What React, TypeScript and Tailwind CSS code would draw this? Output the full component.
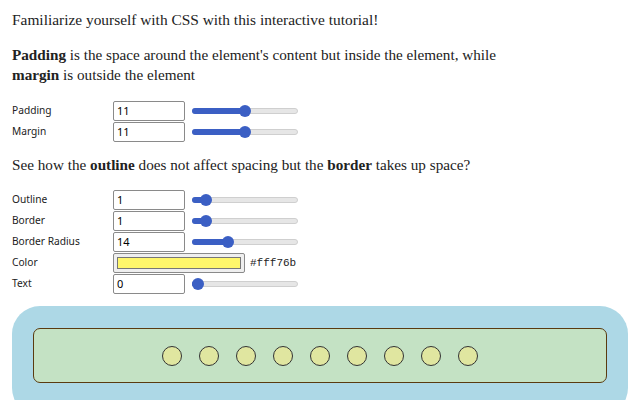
import React from "react";

const serif = { fontFamily: '"Liberation Serif", serif' };

function Slider({ pct }: { pct: number }) {
  const left = (pct * 94) / 100;
  return (
    <div className="relative w-[106px] h-[12px] flex items-center">
      <div className="w-full h-[6px] rounded-full bg-[#e6e6e6] border border-[#cfcfcf]" />
      <div className="absolute left-0 h-[6px] rounded-full bg-[#3b5fc4]" style={{ width: `${left + 6}px` }} />
      <div className="absolute w-[12px] h-[12px] rounded-full bg-[#3b5fc4]" style={{ left: `${left}px` }} />
    </div>
  );
}

function Row({ label, value, pct }: { label: string; value: string; pct: number }) {
  return (
    <div className="flex items-center h-[20px] mb-[1px]">
      <div className="w-[101px] text-[10.2px] text-[#222]">{label}</div>
      <div className="w-[72px] h-[20px] border border-[#8a8a8a] rounded-[2px] bg-white text-[11px] flex items-center pl-[3px] text-black">
        {value}
      </div>
      <div className="ml-[7px]">
        <Slider pct={pct} />
      </div>
    </div>
  );
}

export default function App() {
  return (
    <div className="w-[640px] h-[400px] overflow-hidden bg-white px-[12px] pt-[9px] text-[#222]" style={{ fontFamily: '"Noto Sans", sans-serif' }}>
      <p className="text-[15.4px] leading-[22px]" style={serif}>
        Familiarize yourself with CSS with this interactive tutorial!
      </p>
      <p className="text-[15.2px] leading-[20px] mt-[14px]" style={serif}>
        <b>Padding</b> is the space around the element's content but inside the element, while
        <br />
        <b>margin</b> is outside the element
      </p>
      <div className="mt-[16px]">
        <Row label="Padding" value="11" pct={50} />
        <Row label="Margin" value="11" pct={50} />
      </div>
      <p className="text-[15.2px] leading-[22px] mt-[12px]" style={serif}>
        See how the <b>outline</b> does not affect spacing but the <b>border</b> takes up space?
      </p>
      <div className="mt-[14px]">
        <Row label="Outline" value="1" pct={9} />
        <Row label="Border" value="1" pct={9} />
        <Row label="Border Radius" value="14" pct={32} />
        <div className="flex items-center h-[20px] mb-[1px]">
          <div className="w-[101px] text-[10.2px]">Color</div>
          <div className="w-[132px] h-[20px] border border-[#8a8a8a] rounded-[2px] bg-[#efefef] p-[3px]">
            <div className="w-full h-full bg-[#fff76b] border border-[#777]" />
          </div>
          <div className="ml-[5px] text-[11px]" style={{ fontFamily: '"Liberation Mono", monospace' }}>
            #fff76b
          </div>
        </div>
        <Row label="Text" value="0" pct={0} />
      </div>
      <div className="mt-[12px] bg-[#add8e6] rounded-[28px] h-[110px] px-[21px] pt-[22px]">
        <div className="h-[55px] bg-[#c4e2c4] border border-[#5a3a10] rounded-[7px] flex items-center justify-center gap-[17px]">
          {Array.from({ length: 9 }).map((_, i) => (
            <div key={i} className="w-[20px] h-[20px] rounded-full bg-[#e0e6a0] border border-[#333]" />
          ))}
        </div>
      </div>
    </div>
  );
}
